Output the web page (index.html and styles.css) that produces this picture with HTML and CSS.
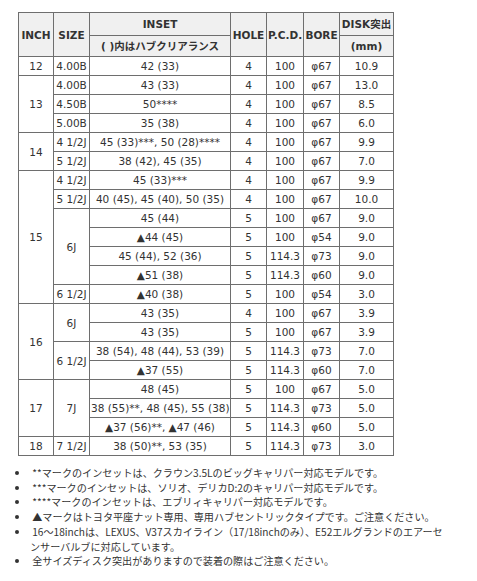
FILE: index.html
```html
<!DOCTYPE html>
<html lang="ja">
<head>
<meta charset="utf-8">
<link rel="stylesheet" href="styles.css">
</head>
<body>
<div class="page">
<table class="spec">
<colgroup>
<col class="c-inch"><col class="c-size"><col class="c-inset"><col class="c-hole"><col class="c-pcd"><col class="c-bore"><col class="c-disk">
</colgroup>
<thead>
<tr class="h1"><th rowspan="2">INCH</th><th rowspan="2">SIZE</th><th>INSET</th><th rowspan="2">HOLE</th><th rowspan="2">P.C.D.</th><th rowspan="2">BORE</th><th>DISK突出</th></tr>
<tr class="h2"><th>( )内はハブクリアランス</th><th>(mm)</th></tr>
</thead>
<tbody>
<tr><td>12</td><td>4.00B</td><td>42 (33)</td><td>4</td><td>100</td><td>φ67</td><td>10.9</td></tr>
<tr><td rowspan="3">13</td><td>4.00B</td><td>43 (33)</td><td>4</td><td>100</td><td>φ67</td><td>13.0</td></tr>
<tr><td>4.50B</td><td>50****</td><td>4</td><td>100</td><td>φ67</td><td>8.5</td></tr>
<tr><td>5.00B</td><td>35 (38)</td><td>4</td><td>100</td><td>φ67</td><td>6.0</td></tr>
<tr><td rowspan="2">14</td><td>4 1/2J</td><td>45 (33)***, 50 (28)****</td><td>4</td><td>100</td><td>φ67</td><td>9.9</td></tr>
<tr><td>5 1/2J</td><td>38 (42), 45 (35)</td><td>4</td><td>100</td><td>φ67</td><td>7.0</td></tr>
<tr><td rowspan="7">15</td><td>4 1/2J</td><td>45 (33)***</td><td>4</td><td>100</td><td>φ67</td><td>9.9</td></tr>
<tr><td>5 1/2J</td><td>40 (45), 45 (40), 50 (35)</td><td>4</td><td>100</td><td>φ67</td><td>10.0</td></tr>
<tr><td rowspan="4">6J</td><td>45 (44)</td><td>5</td><td>100</td><td>φ67</td><td>9.0</td></tr>
<tr><td>▲44 (45)</td><td>5</td><td>100</td><td>φ54</td><td>9.0</td></tr>
<tr><td>45 (44), 52 (36)</td><td>5</td><td>114.3</td><td>φ73</td><td>9.0</td></tr>
<tr><td>▲51 (38)</td><td>5</td><td>114.3</td><td>φ60</td><td>9.0</td></tr>
<tr><td>6 1/2J</td><td>▲40 (38)</td><td>5</td><td>100</td><td>φ54</td><td>3.0</td></tr>
<tr><td rowspan="4">16</td><td rowspan="2">6J</td><td>43 (35)</td><td>4</td><td>100</td><td>φ67</td><td>3.9</td></tr>
<tr><td>43 (35)</td><td>5</td><td>100</td><td>φ67</td><td>3.9</td></tr>
<tr><td rowspan="2">6 1/2J</td><td>38 (54), 48 (44), 53 (39)</td><td>5</td><td>114.3</td><td>φ73</td><td>7.0</td></tr>
<tr><td>▲37 (55)</td><td>5</td><td>114.3</td><td>φ60</td><td>7.0</td></tr>
<tr><td rowspan="3">17</td><td rowspan="3">7J</td><td>48 (45)</td><td>5</td><td>100</td><td>φ67</td><td>5.0</td></tr>
<tr><td>38 (55)**, 48 (45), 55 (38)</td><td>5</td><td>114.3</td><td>φ73</td><td>5.0</td></tr>
<tr><td>▲37 (56)**, ▲47 (46)</td><td>5</td><td>114.3</td><td>φ60</td><td>5.0</td></tr>
<tr><td>18</td><td>7 1/2J</td><td>38 (50)**, 53 (35)</td><td>5</td><td>114.3</td><td>φ73</td><td>3.0</td></tr>
</tbody>
</table>
<ul class="notes">
<li>&nbsp;**マークのインセットは、クラウン3.5Lのビッグキャリパー対応モデルです。</li>
<li>&nbsp;***マークのインセットは、ソリオ、デリカD:2のキャリパー対応モデルです。</li>
<li>&nbsp;****マークのインセットは、エブリィキャリパー対応モデルです。</li>
<li>&nbsp;▲マークはトヨタ平座ナット専用、専用ハブセントリックタイプです。ご注意ください。</li>
<li>&nbsp;16～18inchは、LEXUS、V37スカイライン（17/18inchのみ）、E52エルグランドのエアーセンサーバルブに対応しています。</li>
<li>&nbsp;全サイズディスク突出がありますので装着の際はご注意ください。</li>
</ul>
</div>
</body>
</html>
```
FILE: styles.css
```css
html, body {
  margin: 0;
  padding: 0;
  background: #ffffff;
}
.page {
  padding: 12px 0 0 18px;
  width: 434px;
  color: #333333;
}
.spec {
  border-collapse: collapse;
  table-layout: fixed;
  width: 375px;
  font-family: "DejaVu Sans", "Noto Sans CJK JP", sans-serif;
  font-size: 10.5px;
}
.c-inch { width: 35px; }
.c-size { width: 36px; }
.c-inset { width: 141px; }
.c-hole { width: 36px; }
.c-pcd { width: 37px; }
.c-bore { width: 36px; }
.c-disk { width: 54px; }
.spec th, .spec td {
  border: 1px solid #6e6e6e;
  padding: 0 1px;
  text-align: center;
  white-space: nowrap;
  overflow: hidden;
}
.spec th {
  background: #f0f0f0;
  font-weight: bold;
  color: #333333;
}
.spec .h1 th {
  height: 22px;
  line-height: 22px;
}
.spec .h2 th {
  height: 20px;
  line-height: 20px;
}
.spec td {
  height: 18px;
  line-height: 18px;
}
.notes {
  margin: 10px 0 0 0;
  padding: 0 0 0 12px;
  font-family: "Noto Sans CJK JP", "DejaVu Sans", sans-serif;
  font-size: 10.1px;
  line-height: 14.7px;
  list-style: disc;
}
.notes li {
  margin: 0;
}
```
